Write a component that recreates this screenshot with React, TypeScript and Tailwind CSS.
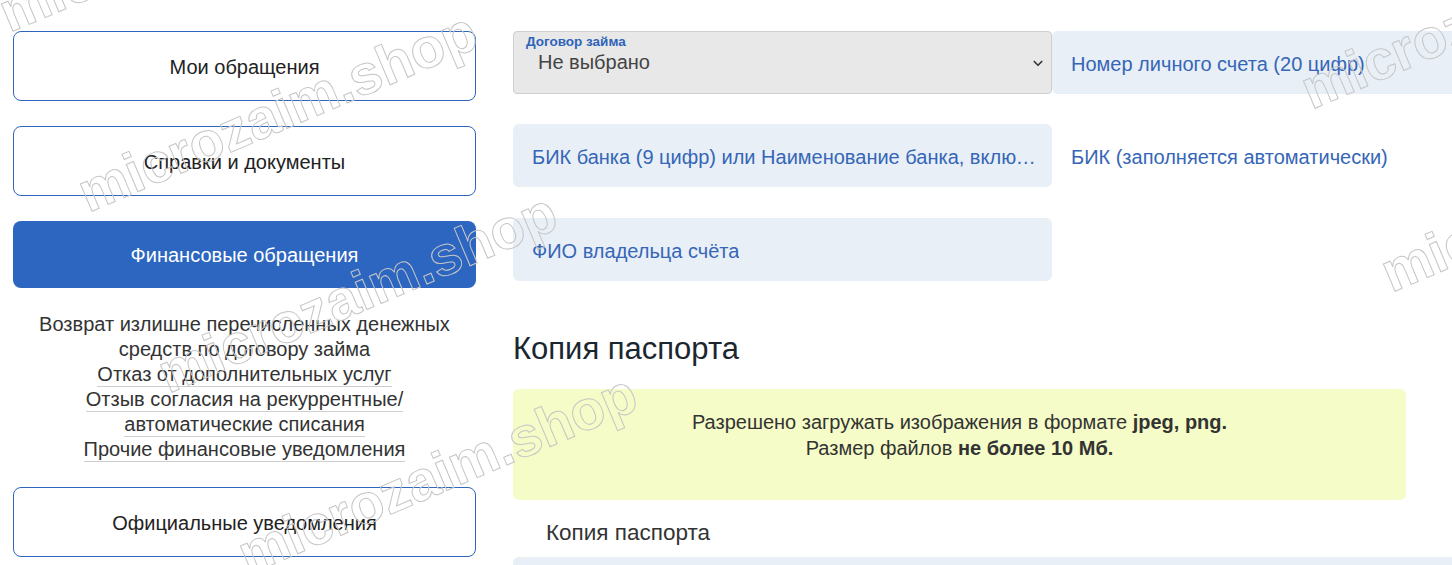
import React from 'react';

const navLinks: string[][] = [
  ['Возврат излишне перечисленных денежных', 'средств по договору займа'],
  ['Отказ от дополнительных услуг'],
  ['Отзыв согласия на рекуррентные/', 'автоматические списания'],
  ['Прочие финансовые уведомления'],
];

const Watermark: React.FC<{ className: string }> = ({ className }) => (
  <span
    className={`pointer-events-none absolute origin-bottom-left whitespace-nowrap text-[56px] leading-none font-bold text-transparent [-webkit-text-stroke:1px_#c6c6c6] -rotate-[23deg] ${className}`}
  >
    microzaim.shop
  </span>
);

const Field: React.FC<{ text: string; plain?: boolean }> = ({ text, plain }) => (
  <div
    className={`flex h-[63px] w-[539px] shrink-0 items-center rounded-[6px] pl-[19px] pr-[8px] ${
      plain ? 'bg-white' : 'bg-[#e9eff6]'
    }`}
  >
    <span className="truncate pt-[3px] text-[20px] text-[#3566b7]">{text}</span>
  </div>
);

const App: React.FC = () => {
  return (
    <div className="relative h-[565px] w-[1452px] overflow-hidden bg-white font-['Liberation_Sans',Arial,sans-serif]">
      <div className="flex gap-[37px] pl-[13px] pt-[31px]">
        {/* left menu */}
        <div className="flex w-[463px] shrink-0 flex-col">
          <button className="h-[70px] rounded-[8px] border border-[#2e66bd] bg-white pt-[2px] text-[20px] text-[#222]">
            Мои обращения
          </button>
          <button className="mt-[25px] h-[70px] rounded-[8px] border border-[#2e66bd] bg-white pt-[2px] text-[20px] text-[#222]">
            Справки и документы
          </button>
          <button className="mt-[25px] h-[67px] rounded-[8px] bg-[#2d66c0] pt-[1px] text-[20px] text-white">
            Финансовые обращения
          </button>
          <div className="mt-[24px] flex flex-col items-center text-center text-[20px] leading-[25px] text-[#333]">
            {navLinks.map((lines, i) =>
              lines.map((line, j) => (
                <a
                  key={`${i}-${j}`}
                  href="#"
                  className={i === 0 ? '' : 'border-b border-[#cfcfcf] leading-[24px]'}
                >
                  {line}
                </a>
              ))
            )}
          </div>
          <button className="mt-[25px] h-[70px] rounded-[8px] border border-[#2e66bd] bg-white pt-[2px] text-[20px] text-[#222]">
            Официальные уведомления
          </button>
        </div>

        {/* right form */}
        <div className="flex w-[1100px] shrink-0 flex-col">
          <div className="flex">
            <div className="relative flex h-[63px] w-[539px] shrink-0 items-center rounded-[4px] border border-[#cfcfcf] bg-[#e8e8e8] pl-[24px]">
              <span className="absolute left-[12px] top-0 text-[13.5px] font-bold text-[#2e63b8]">Договор займа</span>
              <span className="mb-[2px] text-[20px] text-[#444]">Не выбрано</span>
              <svg
                className="absolute right-[7px] top-[25px] h-[12px] w-[12px]"
                viewBox="0 0 16 16"
                fill="none"
                stroke="#333"
                strokeWidth="2.2"
                strokeLinecap="round"
                strokeLinejoin="round"
              >
                <path d="M3 6l5 5 5-5" />
              </svg>
            </div>
            <Field text="Номер личного счета (20 цифр)" />
          </div>
          <div className="mt-[30px] flex">
            <Field text="БИК банка (9 цифр) или Наименование банка, включая отделение" />
            <Field text="БИК (заполняется автоматически)" plain />
          </div>
          <div className="mt-[31px] flex">
            <Field text="ФИО владельца счёта" />
          </div>

          <h2 className="mt-[50px] text-[31px] leading-[36px] text-[#1b2730]">Копия паспорта</h2>

          <div className="mt-[22px] flex h-[111px] w-[893px] flex-col items-center justify-center rounded-[6px] bg-[#f5fcc7] pb-[19px] text-[20px] leading-[26px] text-[#333]">
            <p>
              Разрешено загружать изображения в формате <b>jpeg, png.</b>
            </p>
            <p>
              Размер файлов <b>не более 10 Мб.</b>
            </p>
          </div>

          <p className="mt-[20px] pl-[33px] text-[22.5px] leading-[26px] text-[#333]">Копия паспорта</p>
          <div className="mt-[11px] h-[60px] w-[1100px] rounded-[6px] bg-[#e9eff6]" />
        </div>
      </div>

      {/* watermark */}
      <Watermark className="left-[13px] top-[-15px]" />
      <Watermark className="left-[92px] top-[165px]" />
      <Watermark className="left-[172px] top-[346px]" />
      <Watermark className="left-[252px] top-[527px]" />
      <Watermark className="left-[1315px] top-[62px]" />
      <Watermark className="left-[1395px] top-[245px]" />
    </div>
  );
};

export default App;
